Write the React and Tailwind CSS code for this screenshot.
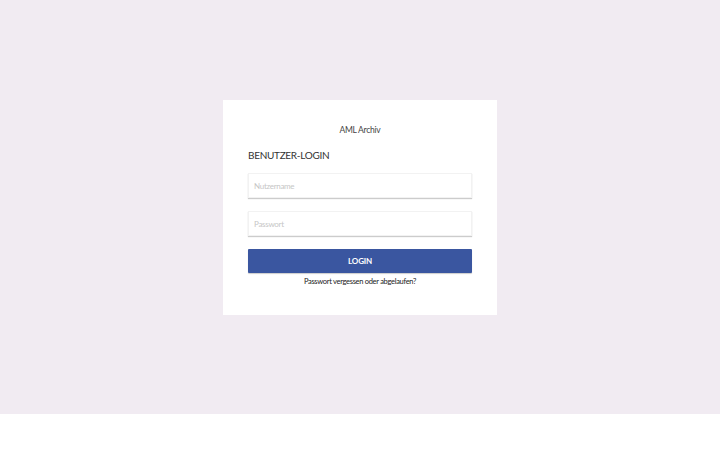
export default function App() {
  return (
    <div className="w-[720px] h-[450px] bg-white" style={{ fontFamily: 'Lato, "Open Sans", sans-serif' }}>
      <div className="h-[414px] bg-[#f1ebf2] flex justify-center pt-[100px]">
        <div className="w-[274px] h-[215px] bg-white px-[25px] pt-[24px]">
          <div className="text-center text-[8.5px] tracking-[-0.25px] text-[#444] leading-[12px]">AML Archiv</div>
          <h1 className="mt-[12px] text-[10px] text-[#333] tracking-[-0.3px] leading-[14px]">BENUTZER-LOGIN</h1>
          <form className="mt-[11px] flex flex-col">
            <input
              type="text"
              placeholder="Nutzername"
              className="h-[25px] w-full px-[5px] text-[8px] tracking-[-0.3px] border border-[#f2f2f2] shadow-[0_1px_1px_rgba(0,0,0,0.2)] placeholder:text-[#c6c6c6] outline-none"
            />
            <input
              type="password"
              placeholder="Passwort"
              className="mt-[13px] h-[25px] w-full px-[5px] text-[8px] tracking-[-0.3px] border border-[#f2f2f2] shadow-[0_1px_1px_rgba(0,0,0,0.2)] placeholder:text-[#c6c6c6] outline-none"
            />
            <button
              type="button"
              className="mt-[13px] h-[24px] w-full bg-[#3a56a0] text-white text-[8px] tracking-[-0.2px] font-bold rounded-[1px] shadow-[0_1px_1px_rgba(0,0,0,0.2)]"
            >
              LOGIN
            </button>
            <a href="#" className="mt-[4px] text-center text-[7.5px] tracking-[-0.3px] text-[#222] leading-[10px]">
              Passwort vergessen oder abgelaufen?
            </a>
          </form>
        </div>
      </div>
    </div>
  );
}
